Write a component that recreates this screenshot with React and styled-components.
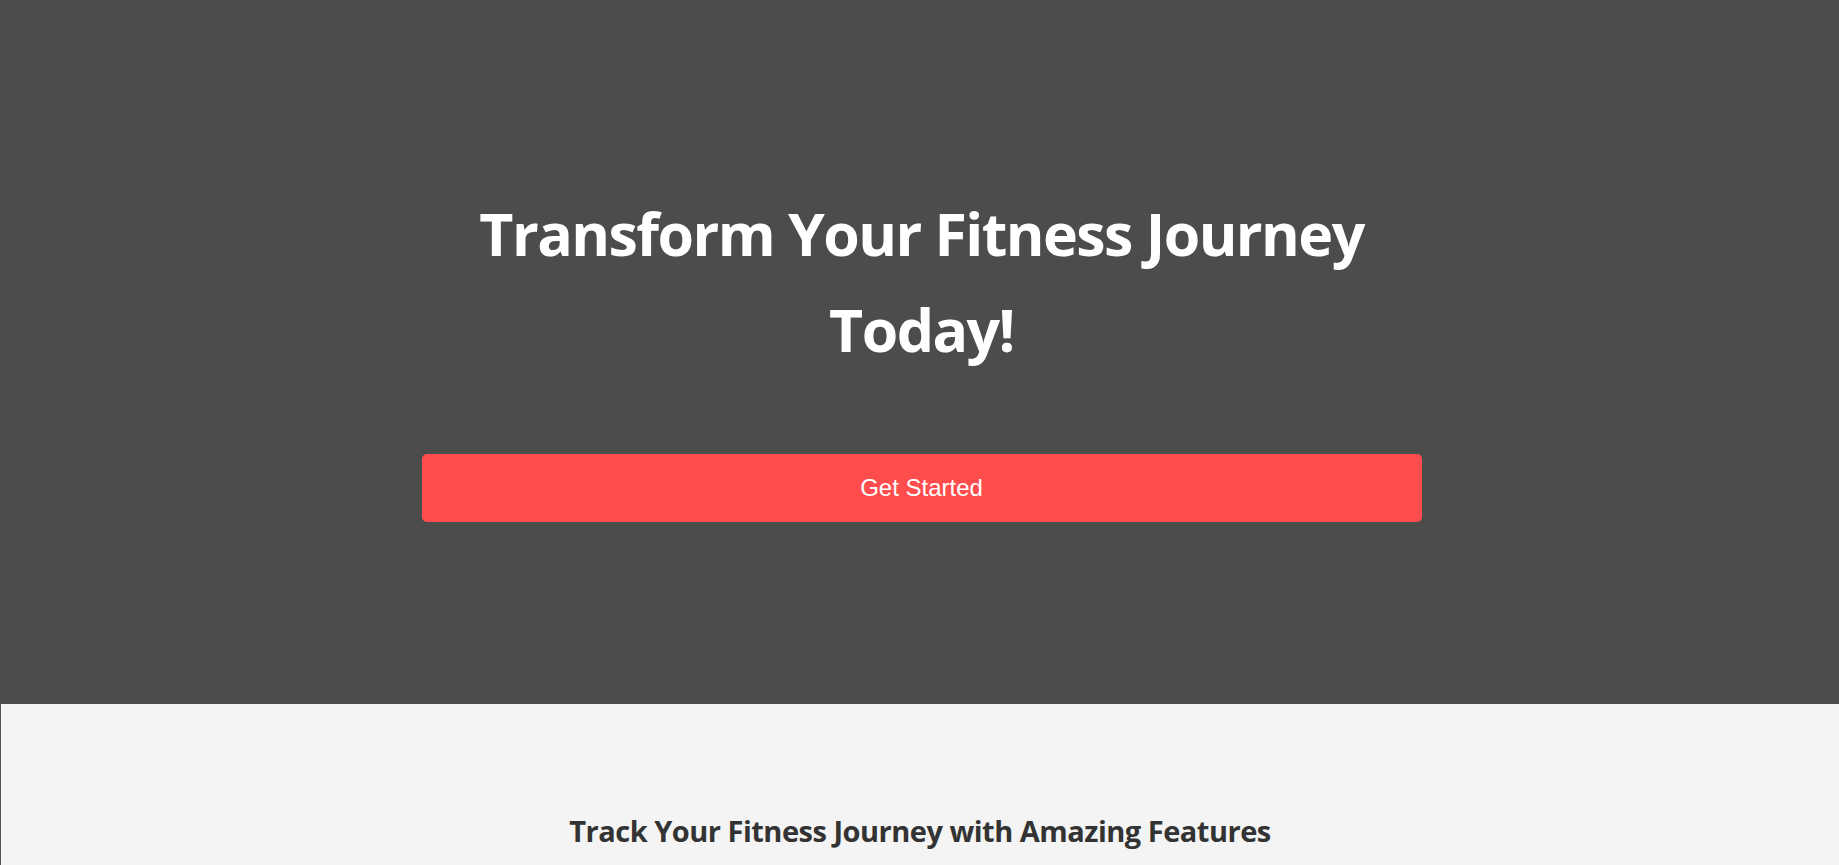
import React from 'react';
import styled, { createGlobalStyle } from 'styled-components';

const GlobalStyle = createGlobalStyle`
  html, body {
    margin: 0;
    padding: 0;
  }
  body {
    font-family: "Open Sans", "Noto Sans", Arial, sans-serif;
    background: #f4f4f4;
    overflow: hidden;
  }
`;

const Hero = styled.header`
  height: 704px;
  box-sizing: border-box;
  padding: 2px 0 0 4px;
  background: #4c4c4c;
  display: flex;
  align-items: center;
  justify-content: center;
`;

const HeroInner = styled.div`
  width: 1000px;
  display: flex;
  flex-direction: column;
  align-items: stretch;
  text-align: center;
`;

const Title = styled.h1`
  margin: 0 0 77px;
  font-size: 59px;
  line-height: 96px;
  font-weight: 700;
  letter-spacing: -1.55px;
  color: #fff;
`;

const CtaButton = styled.button`
  height: 68px;
  border: 0;
  border-radius: 5px;
  background: #ff4d4d;
  color: #fff;
  font-family: "Liberation Sans", Arial, sans-serif;
  font-size: 24px;
  cursor: pointer;
`;

const Features = styled.section`
  border-left: 1px solid #555;
  padding: 80px 20px;
  text-align: center;
`;

const SectionTitle = styled.h2`
  margin: 26px 0;
  font-size: 29px;
  line-height: 42px;
  font-weight: 700;
  letter-spacing: -0.5px;
  color: #333;
`;

export default function App() {
  return (
    <>
      <GlobalStyle />
      <Hero>
        <HeroInner>
          <Title>Transform Your Fitness Journey Today!</Title>
          <CtaButton>Get Started</CtaButton>
        </HeroInner>
      </Hero>
      <Features>
        <SectionTitle>Track Your Fitness Journey with Amazing Features</SectionTitle>
      </Features>
    </>
  );
}
